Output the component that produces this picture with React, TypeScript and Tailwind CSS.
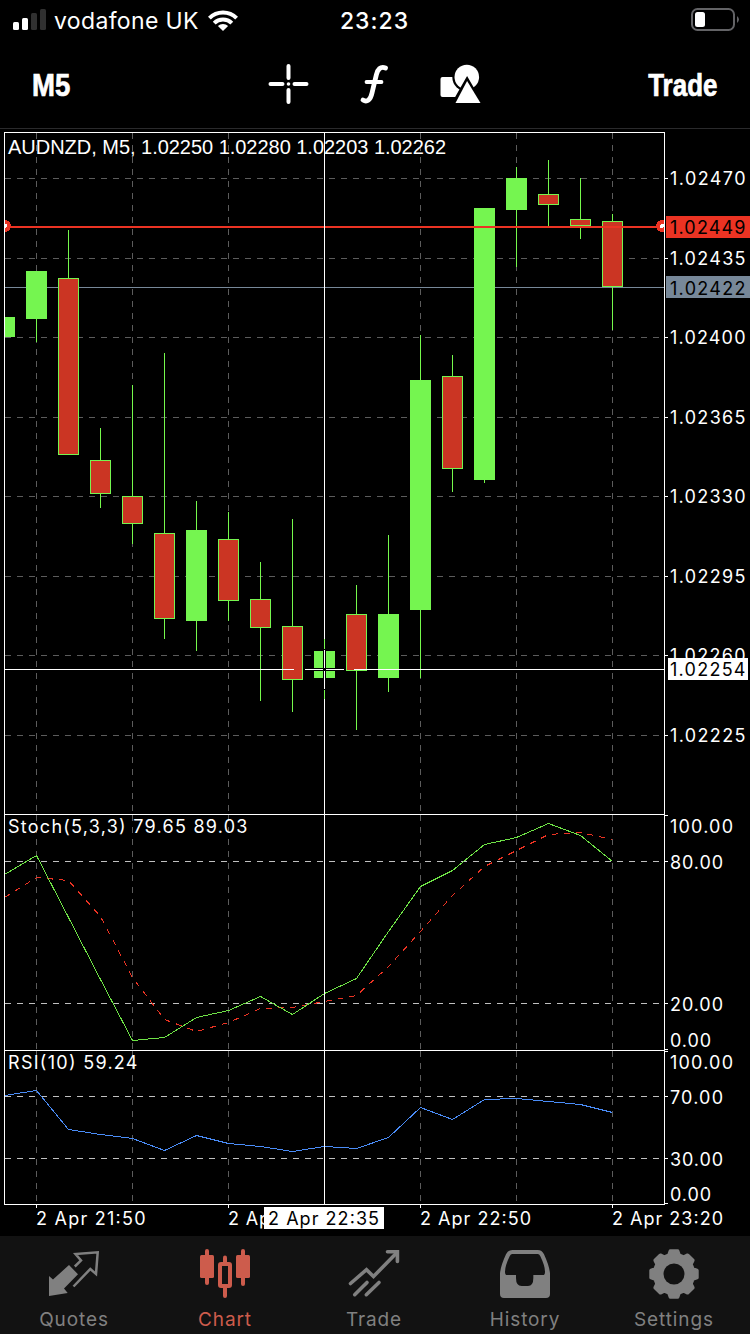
import React from "react";

type Candle = { x: number; top: number; bottom: number; high: number; low: number; up: boolean };

const candles: Candle[] = [
  { x: 4, top: 317, bottom: 337, high: 317, low: 337, up: true },
  { x: 36, top: 271, bottom: 319, high: 271, low: 342, up: true },
  { x: 68, top: 278, bottom: 455, high: 230, low: 455, up: false },
  { x: 100, top: 460, bottom: 494, high: 428, low: 508, up: false },
  { x: 132, top: 496, bottom: 524, high: 385, low: 544, up: false },
  { x: 164, top: 533, bottom: 619, high: 353, low: 639, up: false },
  { x: 196, top: 530, bottom: 621, high: 501, low: 651, up: true },
  { x: 228, top: 539, bottom: 601, high: 512, low: 621, up: false },
  { x: 260, top: 599, bottom: 628, high: 562, low: 701, up: false },
  { x: 292, top: 626, bottom: 680, high: 519, low: 712, up: false },
  { x: 324, top: 651, bottom: 678, high: 639, low: 699, up: true },
  { x: 356, top: 614, bottom: 671, high: 585, low: 730, up: false },
  { x: 388, top: 614, bottom: 678, high: 535, low: 692, up: true },
  { x: 420, top: 380, bottom: 610, high: 335, low: 678, up: true },
  { x: 452, top: 376, bottom: 469, high: 355, low: 492, up: false },
  { x: 484, top: 208, bottom: 480, high: 208, low: 483, up: true },
  { x: 516, top: 178, bottom: 210, high: 167, low: 267, up: true },
  { x: 548, top: 194, bottom: 205, high: 160, low: 226, up: false },
  { x: 580, top: 219, bottom: 226, high: 178, low: 239, up: false },
  { x: 612, top: 221, bottom: 287, high: 214, low: 330, up: false },
];

const stochMain = [874, 855, 917, 979, 1040, 1037, 1017, 1010, 996, 1014, 993, 978, 931, 886, 870, 844, 837, 823, 835, 861];
const stochSignal = [897, 877, 880, 916, 977, 1019, 1031, 1022, 1008, 1007, 1001, 995, 966, 931, 895, 866, 850, 834, 832, 839];
const rsi = [1095, 1090, 1129, 1134, 1138, 1150, 1135, 1143, 1146, 1151, 1146, 1148, 1137, 1107, 1119, 1099, 1098, 1101, 1104, 1112];

const toPoints = (ys: number[]) => ys.map((y, i) => `${4.5 + i * 32},${y + 0.5}`).join(" ");

const prices: [number, string][] = [
  [178, "1.02470"],
  [258, "1.02435"],
  [337, "1.02400"],
  [417, "1.02365"],
  [496, "1.02330"],
  [576, "1.02295"],
  [655, "1.02260"],
  [735, "1.02225"],
];

const scaleLabels: [number, string, number][] = [
  [832, "100.00", 63],
  [868, "80.00", 53],
  [1010, "20.00", 53],
  [1046, "0.00", 41],
  [1068, "100.00", 63],
  [1103, "70.00", 53],
  [1165, "30.00", 53],
  [1200, "0.00", 41],
];

const dates: [number, string][] = [
  [36, "2 Apr 21:50"],
  [228, "2 Apr 22:20"],
  [420, "2 Apr 22:50"],
  [612, "2 Apr 23:20"],
];

const gridX = [36, 132, 228, 324, 420, 516, 612];
const panes: [number, number][] = [
  [133, 814],
  [815, 1050],
  [1051, 1204],
];

function Label({ x, y, w, color = "#fff", children }: { x: number; y: number; w: number; color?: string; children: string }) {
  return (
    <text x={x} y={y + 0.5} textLength={w} fill={color} className="font-['Inter',sans-serif] text-[18px]">
      {children}
    </text>
  );
}

function Chart() {
  return (
    <svg viewBox="0 129 750 1107" width="750" height="1107" className="block shrink-0">
      <defs>
        <clipPath id="plot">
          <rect x="5" y="133" width="659" height="1071" />
        </clipPath>
      </defs>
      <g shapeRendering="crispEdges" clipPath="url(#plot)">
        {prices.map(([y]) => (
          <path key={y} d={`M5 ${y + 0.5}H664`} stroke="#5c5c5c" strokeDasharray="6 6" />
        ))}
        {panes.map(([a, b]) =>
          gridX.map((x) => <path key={`${a}-${x}`} d={`M${x + 0.5} ${a}V${b}`} stroke="#5c5c5c" strokeDasharray="6 6" />)
        )}
        {[861, 1003, 1096, 1158].map((y) => (
          <path key={y} d={`M5 ${y + 0.5}H664`} stroke="#c0c0c0" strokeDasharray="6 6" />
        ))}
        <rect x="5" y="287" width="659" height="1" fill="#778899" />
        {candles.map((c) => (
          <g key={c.x}>
            <rect x={c.x} y={c.high} width="1" height={c.low - c.high} fill="#75f94c" />
            <rect x={c.x - 10} y={c.top} width="21" height={c.bottom - c.top} fill="#75f550" />
            {!c.up && <rect x={c.x - 9} y={c.top + 1} width="19" height={c.bottom - c.top - 2} fill="#cb3523" />}
          </g>
        ))}
        <polyline points={toPoints(stochSignal)} fill="none" stroke="#eb3323" strokeDasharray="6 6" />
        <polyline points={toPoints(stochMain)} fill="none" stroke="#6ee246" />
        <polyline points={toPoints(rsi)} fill="none" stroke="#4a8cf7" />
        <rect x="5" y="226" width="659" height="2" fill="#eb3323" />
        <circle cx="5" cy="226" r="6" fill="#eb3323" />
        <circle cx="5" cy="226" r="2" fill="#fff" />
        <circle cx="662" cy="226" r="6" fill="#eb3323" />
        <circle cx="662" cy="226" r="2" fill="#fff" />
      </g>
      <text x="8" y="154" textLength="438" fill="#fff" className="font-['Liberation_Sans',Arial,sans-serif] text-[20px]">
        AUDNZD, M5, 1.02250 1.02280 1.02203 1.02262
      </text>
      <Label x={8} y={832} w={239.5}>Stoch(5,3,3) 79.65 89.03</Label>
      <Label x={8} y={1068} w={129.5}>RSI(10) 59.24</Label>
      <g shapeRendering="crispEdges">
        <rect x="323" y="650" width="3" height="39" fill="#000" />
        <rect x="305" y="668" width="39" height="3" fill="#000" />
        <rect x="324" y="649" width="1" height="41" fill="#000" />
        <g fill="#fff">
          <rect x="324" y="133" width="1" height="506" />
          <rect x="324" y="650" width="1" height="18" />
          <rect x="324" y="671" width="1" height="18" />
          <rect x="324" y="699" width="1" height="505" />
          <rect x="5" y="669" width="289" height="1" />
          <rect x="305" y="669" width="18" height="1" />
          <rect x="326" y="669" width="18" height="1" />
          <rect x="354" y="669" width="310" height="1" />
          <rect x="4" y="132" width="661" height="1" />
          <rect x="4" y="814" width="661" height="1" />
          <rect x="4" y="1050" width="661" height="1" />
          <rect x="4" y="1204" width="661" height="1" />
          <rect x="4" y="132" width="1" height="1073" />
          <rect x="664" y="132" width="1" height="1073" />
          {[...prices.map((p) => p[0]), 815, 861, 1003, 1049, 1051, 1096, 1158, 1203].map((y) => (
            <rect key={y} x="665" y={y} width="3" height="1" />
          ))}
          {dates.map(([x]) => (
            <rect key={x} x={x} y="1205" width="1" height="3" />
          ))}
        </g>
      </g>
      {prices.map(([y, t]) => (
        <Label key={t} x={670} y={y + 6} w={75.5}>{t}</Label>
      ))}
      {scaleLabels.map(([y, t, w]) => (
        <Label key={y} x={670} y={y} w={w}>{t}</Label>
      ))}
      {dates.map(([x, t]) => (
        <Label key={t} x={x} y={1224} w={x > 400 ? 111 : 109.5}>{t}</Label>
      ))}
      <rect x="666" y="216" width="84" height="22" fill="#eb3323" />
      <Label x={670} y={233} w={75.5} color="#000">1.02449</Label>
      <rect x="666" y="276" width="84" height="22" fill="#778899" />
      <Label x={670} y={294} w={75.5} color="#000">1.02422</Label>
      <rect x="668" y="658" width="80" height="22" fill="#fff" />
      <Label x={670} y={675} w={75.5} color="#000">1.02254</Label>
      <rect x="264" y="1207" width="120" height="22" fill="#fff" />
      <Label x={268} y={1224} w={111} color="#000">2 Apr 22:35</Label>
    </svg>
  );
}

function StatusBar() {
  return (
    <div className="flex h-10 items-center justify-between pl-[13px] pr-[11px] font-['Inter',sans-serif]">
      <div className="flex w-[300px] items-center">
        <svg width="34" height="22" viewBox="0 0 34 22" className="mr-[7px]">
          <rect x="0" y="13" width="6" height="8" rx="1.5" fill="#fff" />
          <rect x="9" y="9" width="6" height="12" rx="1.5" fill="#fff" />
          <rect x="18" y="4" width="6" height="17" rx="1.5" fill="#303030" />
          <rect x="27" y="0" width="6" height="21" rx="1.5" fill="#303030" />
        </svg>
        <span className="whitespace-nowrap pt-[2px] text-[23px] leading-[28px] tracking-[0.35px]">vodafone UK</span>
        <svg width="30" height="23" viewBox="0 0 30 23" className="ml-[9px]" fill="none" stroke="#fff" strokeWidth="4">
          <path d="M1.4 9.2A19.3 19.3 0 0 1 28.6 9.2" />
          <path d="M6.2 14.2A12.5 12.5 0 0 1 23.8 14.2" />
          <path d="M15 22L9.9 17A7.3 7.3 0 0 1 20.1 17Z" fill="#fff" stroke="none" />
        </svg>
      </div>
      <span className="pr-[3px] pt-[2px] text-[23px] font-medium leading-[28px] tracking-[1px]">23:23</span>
      <div className="flex w-[300px] justify-end">
        <svg width="49" height="24" viewBox="0 0 49 24">
          <rect x="2" y="1" width="42" height="21" rx="5.5" fill="none" stroke="#636366" strokeWidth="2" />
          <rect x="5" y="4" width="10" height="15" rx="2.5" fill="#fff" />
          <path d="M47 8Q51 11.500 47 15Z" fill="#636366" />
        </svg>
      </div>
    </div>
  );
}

function Toolbar() {
  return (
    <div className="flex h-[89px] items-center justify-between border-b border-[#2a2a2c] pl-8 pr-[33px] font-['Liberation_Sans',Arial,sans-serif] text-[32px] font-bold leading-[90px]">
      <div className="w-[200px] pt-[2px]">
        <span className="inline-block origin-left scale-x-[0.86] [-webkit-text-stroke:0.7px_white]">M5</span>
      </div>
      <div className="flex items-center">
        <svg width="216" height="42" viewBox="266.5 63 216 42">
          <g stroke="#fff" strokeWidth="4" strokeLinecap="round">
            <path d="M288 66V78M288 90V102M270 84H282M294 84H306" />
          </g>
          <circle cx="288" cy="84" r="1.8" fill="#fff" />
          <g fill="none" stroke="#fff" strokeLinecap="round">
            <path d="M385 68C380 66 377 69.500 375.800 75L371.500 93C370 100 366.500 102.500 362.500 100" strokeWidth="4.800" />
            <path d="M366 82H381" strokeWidth="3.800" />
          </g>
          <rect x="440" y="77" width="21" height="20" rx="2" fill="#fff" />
          <circle cx="466.300" cy="77" r="14.500" fill="#000" />
          <circle cx="466.300" cy="77" r="12.300" fill="#fff" />
          <path d="M466.600 80L453 104H480.500Z" fill="#fff" stroke="#000" strokeWidth="4" />
          <path d="M466.600 81L455 103H480Z" fill="#fff" />
        </svg>
      </div>
      <div className="flex w-[200px] justify-end pt-[2px]">
        <span className="inline-block origin-right scale-x-[0.81] [-webkit-text-stroke:0.7px_white]">Trade</span>
      </div>
    </div>
  );
}

const gearPath = (() => {
  const pts: string[] = [];
  for (let i = 0; i < 8; i++) {
    const base = i * 45 - 90;
    const tooth: [number, number][] = [
      [-15, 19.5],
      [-9, 23.2],
      [9, 23.2],
      [15, 19.5],
    ];
    tooth.forEach(([a, r]) => {
      const t = ((base + a) * Math.PI) / 180;
      pts.push(`${(25 + r * Math.cos(t)).toFixed(2)} ${(25 + r * Math.sin(t)).toFixed(2)}`);
    });
  }
  return `M${pts.join("L")}Z`;
})();

const icons: Record<string, React.ReactNode> = {
  Quotes: (
    <svg width="52" height="50" viewBox="48 1249 52 50">
      <path d="M49 1276L53 1279.500L69 1265L78 1274.300L64 1288.500L67.700 1293L49 1296Z" fill="currentColor" />
      <path d="M74.800 1266.500L81 1260.500L75.500 1254L97.700 1252.300L96 1274L90.300 1269L73.500 1286.500" fill="none" stroke="currentColor" strokeWidth="2.500" />
    </svg>
  ),
  Chart: (
    <svg width="50" height="50" viewBox="200 1249 50 50" fill="currentColor">
      <rect x="200" y="1255" width="14" height="23" rx="1.500" />
      <rect x="205" y="1249" width="4" height="36" rx="2" />
      <rect x="236" y="1255" width="14" height="23" rx="1.500" />
      <rect x="241" y="1249" width="4" height="37" rx="2" />
      <rect x="223" y="1255.500" width="4" height="8" rx="2" />
      <rect x="223" y="1285" width="4" height="13" rx="2" />
      <rect x="220" y="1264" width="10" height="22" rx="1" fill="none" stroke="currentColor" strokeWidth="4" />
    </svg>
  ),
  Trade: (
    <svg width="52" height="50" viewBox="348 1249 52 50" fill="none" stroke="currentColor" strokeWidth="3.600" strokeLinecap="round">
      <path d="M350.500 1283.500L366.500 1269.700L373.500 1276.500L397 1252.500" />
      <path d="M387.500 1251.800H397.400V1261.500" />
      <path d="M354.700 1294.700L367 1282.500M366.300 1294.700L379 1282.500" />
    </svg>
  ),
  History: (
    <svg width="50" height="50" viewBox="375 177 150 150" fill="currentColor" fillRule="evenodd">
      <path d="M375 250Q377 228 393 193Q399 180 412 180H488Q501 180 507 193Q523 228 525 250V312Q525 324 513 324H387Q375 324 375 312ZM412 192Q407 192 404 199Q390 228 390 245Q390 255 396 255H423V264Q423 288 440 288H459Q475 288 475 264V255H504Q510 255 510 245Q510 228 496 199Q493 192 488 192Z" />
    </svg>
  ),
  Settings: (
    <svg width="50" height="50" viewBox="0 0 50 50">
      <path d={gearPath} fill="currentColor" stroke="currentColor" strokeWidth="3.6" strokeLinejoin="round" />
      <circle cx="25" cy="25" r="10.500" fill="#121212" />
    </svg>
  ),
};

function TabBar() {
  return (
    <nav className="grid h-[98px] shrink-0 grid-cols-[148px_154px_144px_158px_140px] bg-[#121212] pt-[13px] font-['Inter',sans-serif]">
      {Object.keys(icons).map((name) => (
        <div key={name} className={`flex flex-col items-center ${name === "Chart" ? "text-[#cd5c4c]" : "text-[#808080]"}`}>
          {icons[name]}
          <span className="mt-[9px] text-[19px] leading-6 tracking-[0.9px]">{name}</span>
        </div>
      ))}
    </nav>
  );
}

export default function App() {
  return (
    <div className="flex h-[1334px] w-[750px] flex-col overflow-hidden bg-black text-white">
      <StatusBar />
      <Toolbar />
      <Chart />
      <TabBar />
    </div>
  );
}
